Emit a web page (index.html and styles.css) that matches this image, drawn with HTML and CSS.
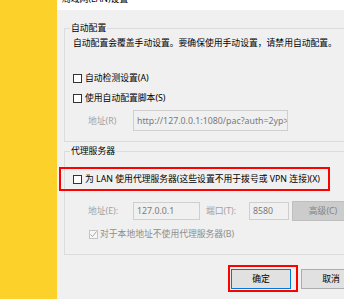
FILE: index.html
```html
<!DOCTYPE html>
<html lang="zh-CN">
<head>
<meta charset="utf-8">
<title>局域网(LAN)设置</title>
<link rel="stylesheet" href="styles.css">
</head>
<body>
<div class="screen">
  <div class="side"></div>
  <div class="dialog">
    <div class="titlebar"><span class="title">局域网(LAN)设置</span></div>
    <div class="content">
      <fieldset class="group g1">
        <legend>自动配置</legend>
        <p class="desc">自动配置会覆盖手动设置。要确保使用手动设置，请禁用自动配置。</p>
        <div class="check c1"><span class="box"></span><span>自动检测设置(A)</span></div>
        <div class="check"><span class="box"></span><span>使用自动配置脚本(S)</span></div>
        <div class="row rowr">
          <span class="lbl">地址(R)</span>
          <div class="input url">http://127.0.0.1:1080/pac?auth=2yp&gt;</div>
        </div>
      </fieldset>
      <fieldset class="group g2">
        <legend>代理服务器</legend>
        <div class="mark">
          <div class="check"><span class="box"></span><span>为 LAN 使用代理服务器(这些设置不用于拨号或 VPN 连接)(X)</span></div>
        </div>
        <div class="row rowe">
          <span class="lbl">地址(E):</span>
          <div class="input addr">127.0.0.1</div>
          <span class="lbl port-lbl">端口(T):</span>
          <div class="input port">8580</div>
          <div class="btn adv">高级(C)</div>
        </div>
        <div class="check dis">
          <span class="box checked"><svg width="9" height="9" viewBox="0 0 9 9"><polyline points="1.5,4.5 3.5,6.5 7.5,1.5" fill="none" stroke="#a8a8a8" stroke-width="1"/></svg></span>
          <span>对于本地地址不使用代理服务器(B)</span>
        </div>
      </fieldset>
      <div class="actions">
        <div class="mark okmark"><div class="btn ok">确定</div></div>
        <div class="btn cancel">取消</div>
      </div>
    </div>
  </div>
</div>
</body>
</html>
```
FILE: styles.css
```css
* { box-sizing: border-box; }
html, body { margin: 0; padding: 0; }
body {
  width: 344px;
  height: 299px;
  overflow: hidden;
  background: #f0f0f0;
  font-family: "Noto Sans", "Noto Sans CJK SC", sans-serif;
  font-size: 8.8px;
  line-height: 12px;
  color: #000;
}
.screen { display: flex; height: 299px; }
.side { flex: 0 0 57px; background: #fcd12a; }
.dialog { flex: 0 0 330px; display: flex; flex-direction: column; background: #f0f0f0; }
.titlebar { height: 10px; background: #fff; overflow: hidden; padding-left: 5px; }
.title { display: block; margin-top: -6px; line-height: 11px; }
.content { padding-left: 7px; }

.group {
  margin: 0;
  border: 1px solid #dcdcdc;
  width: 320px;
  min-width: 0;
  padding: 0 0 10px 8px;
}
.group legend { margin-left: -3px; padding: 0 1px; line-height: 11px; }
.g1 { margin-top: 13px; }
.g2 { margin-top: 4px; }

.desc { margin: 3px 0 0; white-space: nowrap; }

.check { display: flex; align-items: center; height: 20px; white-space: nowrap; }
.c1 { margin-top: 19px; }
.box {
  flex: 0 0 9px;
  width: 9px;
  height: 9px;
  border: 1px solid #333;
  background: #fff;
  margin-right: 3px;
}
.box svg { display: block; margin: -1px; }
.check.dis { margin-top: 3px; padding-left: 16px; color: #8d8d8d; }
.check.dis .box { border-color: #c4c4c4; background: #f7f7f7; margin-right: 2px; }

.row { display: flex; align-items: center; white-space: nowrap; }
.lbl { color: #a2a2a2; margin-left: 15px; flex: 0 0 45px; }
.rowr { margin-top: 2px; height: 21px; }
.input {
  border: 1px solid #cfcfcf;
  background: #f0f0f0;
  color: #7a7a7a;
  padding-left: 3px;
  overflow: hidden;
  white-space: nowrap;
  display: flex;
  align-items: center;
}
.url { width: 155px; height: 21px; }

.mark { border: 2px solid #f00; }
.g2 .mark { margin-left: -14px; margin-top: 10px; width: 271px; height: 24px; padding-left: 12px; }

.rowe { margin-top: 10px; height: 20px; }
.addr { width: 67px; height: 18px; }
.port-lbl { margin-left: 6px; flex: 0 0 43px; }
.port { width: 40px; height: 18px; }

.btn {
  display: flex;
  align-items: center;
  justify-content: center;
  height: 20px;
  background: #e1e1e1;
  border: 1px solid #adadad;
}
.adv { flex: 0 0 62px; margin-left: 3px; background: #cccccc; border-color: #bfbfbf; color: #838383; }

.actions { display: flex; align-items: flex-start; margin-top: 10px; margin-left: 164px; }
.okmark { padding: 2px 5px 1px 1px; }
.ok { width: 60px; border-color: #0078d7; }
.cancel { width: 60px; margin-left: 3px; margin-top: 4px; }
```
